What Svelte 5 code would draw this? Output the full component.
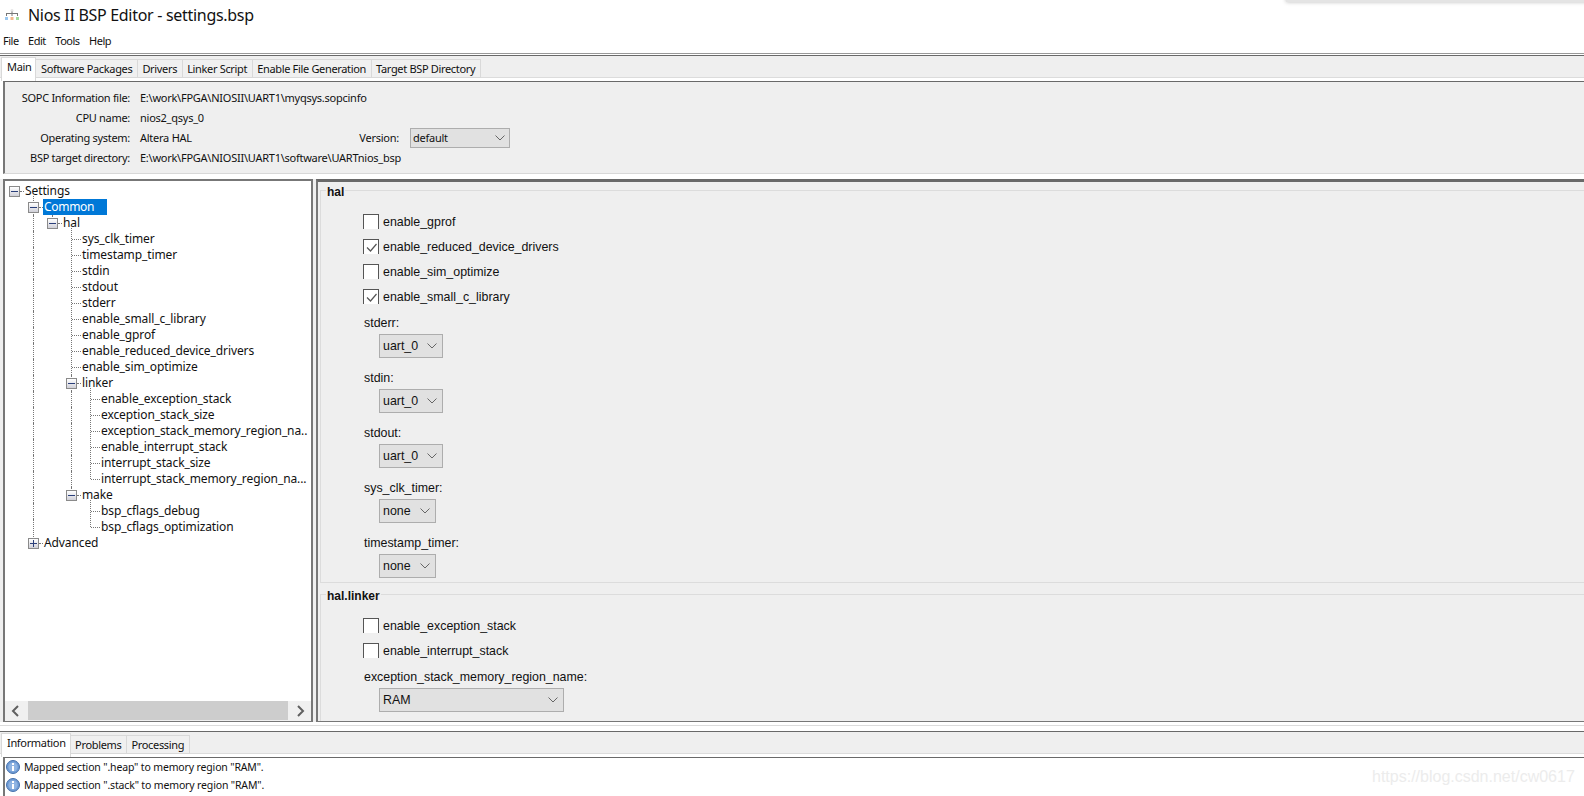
<script>
  const infoRows = [
    ['SOPC Information file:', 'E:\\work\\FPGA\\NIOSII\\UART1\\myqsys.sopcinfo'],
    ['CPU name:', 'nios2_qsys_0'],
    ['Operating system:', 'Altera HAL'],
    ['BSP target directory:', 'E:\\work\\FPGA\\NIOSII\\UART1\\software\\UARTnios_bsp']
  ];
  const tabs = ['Software Packages', 'Drivers', 'Linker Script', 'Enable File Generation', 'Target BSP Directory'];
  // g: one entry per indent column, 1 = dotted vertical guide in that column
  const tree = [
    { t: 'Settings', g: [], exp: '-', top: true },
    { t: 'Common', g: [0], exp: '-', sel: true, down: true, tick: true },
    { t: 'hal', g: [0, 1], exp: '-' },
    ...['sys_clk_timer', 'timestamp_timer', 'stdin', 'stdout', 'stderr', 'enable_small_c_library', 'enable_gprof', 'enable_reduced_device_drivers', 'enable_sim_optimize']
      .map((t) => ({ t, g: [0, 1, 0], conn: 'mid' })),
    { t: 'linker', g: [0, 1, 0], exp: '-', down: true },
    ...['enable_exception_stack', 'exception_stack_size', 'exception_stack_memory_region_na..', 'enable_interrupt_stack', 'interrupt_stack_size']
      .map((t) => ({ t, g: [0, 1, 0, 1], conn: 'mid' })),
    { t: 'interrupt_stack_memory_region_na...', g: [0, 1, 0, 1], conn: 'end' },
    { t: 'make', g: [0, 1, 0], exp: '-' },
    { t: 'bsp_cflags_debug', g: [0, 1, 0, 0], conn: 'mid' },
    { t: 'bsp_cflags_optimization', g: [0, 1, 0, 0], conn: 'end' },
    { t: 'Advanced', g: [0], exp: '+', tick: true }
  ];
  const halChecks = [['enable_gprof', false], ['enable_reduced_device_drivers', true], ['enable_sim_optimize', false], ['enable_small_c_library', true]];
  const halSelects = [['stderr:', 'uart_0', 64], ['stdin:', 'uart_0', 64], ['stdout:', 'uart_0', 64], ['sys_clk_timer:', 'none', 57], ['timestamp_timer:', 'none', 57]];
</script>

{#snippet chevron()}
  <svg class="chev" width="10" height="6" viewBox="0 0 10 6"><path d="M.5.5L5 5 9.5.5" fill="none" stroke="#666" stroke-width="1" /></svg>
{/snippet}

{#snippet info()}
  <svg class="infoicon" width="14" height="14" viewBox="0 0 14 14">
    <circle cx="7" cy="7" r="6.5" fill="#6f9bd4" stroke="#4672ad" />
    <circle cx="7" cy="7" r="4.6" fill="#8fb4e2" />
    <rect x="6" y="6" width="2" height="5" fill="#fff" />
    <rect x="6" y="3" width="2" height="2" fill="#fff" />
  </svg>
{/snippet}

<div class="app">
  <div class="shadow"></div>
  <header class="title">
    <svg class="logo" width="16" height="12" viewBox="0 0 16 12">
      <circle cx="8" cy="1.5" r="1.5" fill="#e4e4e4" />
      <path d="M2 4.5H14M2.5 4.5V7M8 2.5V7M13.5 4.5V7" fill="none" stroke="#777" stroke-width="1" />
      <rect x="1" y="8" width="3" height="3" fill="#9cc8f0" />
      <rect x="6.5" y="8" width="3" height="3" fill="#f3b88c" />
      <rect x="12" y="8" width="3" height="3" fill="#a4dca0" />
    </svg>
    <span>Nios II BSP Editor - settings.bsp</span>
  </header>
  <nav class="menu"><span>File</span><span>Edit</span><span>Tools</span><span>Help</span></nav>

  <div class="rule-top">
    <div class="strip">
      <div class="tab active">Main</div>
      {#each tabs as t}<div class="tab">{t}</div>{/each}
    </div>
    <section class="infopanel">
      <div class="inforows">
        {#each infoRows as [k, v], i}
          <div class="irow">
            <span class="ik">{k}</span><span class="iv">{v}</span>
            {#if i === 2}
              <span class="vlabel">Version:</span>
              <div class="select version"><span>default</span>{@render chevron()}</div>
            {/if}
          </div>
        {/each}
      </div>
    </section>
  </div>

  <div class="split">
    <aside class="treepane">
      <div class="tree">
        {#each tree as n}
          <div class="trow">
            {#each n.g as line}<span class="cell" class:vline={line}></span>{/each}
            {#if n.exp}
              <span class="cell exp" class:hasup={!n.top} class:tick={n.tick} class:down={n.down}>
                <span class="box">
                  <i class="h"></i>{#if n.exp === '+'}<i class="v"></i>{/if}
                </span>
              </span>
            {:else}
              <span class="cell conn" class:end={n.conn === 'end'}></span>
            {/if}
            <span class="tlabel" class:sel={n.sel}>{n.t}</span>
          </div>
        {/each}
      </div>
      <div class="hscroll">
        <svg width="9" height="12" viewBox="0 0 9 12"><path d="M7 1L2 6l5 5" fill="none" stroke="#606060" stroke-width="2" /></svg>
        <div class="thumb"></div>
        <svg width="9" height="12" viewBox="0 0 9 12"><path d="M2 1l5 5-5 5" fill="none" stroke="#606060" stroke-width="2" /></svg>
      </div>
    </aside>

    <main class="settings">
      <fieldset class="group hal">
        <legend>hal</legend>
        <div class="gbody">
          {#each halChecks as [l, c]}
            <div class="check">
              <span class="cb">{#if c}<svg width="13" height="13" viewBox="0 0 13 13"><path d="M2 6.5l3.5 3.5L11.5 3" fill="none" stroke="#555" stroke-width="1.2" /></svg>{/if}</span>
              <span class="clabel">{l}</span>
            </div>
          {/each}
          {#each halSelects as [l, v, w]}
            <div class="field">
              <div class="flabel">{l}</div>
              <div class="select" style="width:{w}px"><span>{v}</span>{@render chevron()}</div>
            </div>
          {/each}
        </div>
      </fieldset>
      <fieldset class="group linker">
        <legend>hal.linker</legend>
        <div class="gbody">
          <div class="check"><span class="cb"></span><span class="clabel">enable_exception_stack</span></div>
          <div class="check"><span class="cb"></span><span class="clabel">enable_interrupt_stack</span></div>
          <div class="field">
            <div class="flabel">exception_stack_memory_region_name:</div>
            <div class="select" style="width:185px"><span>RAM</span>{@render chevron()}</div>
          </div>
        </div>
      </fieldset>
    </main>
  </div>

  <footer class="console">
    <div class="strip">
      <div class="tab active">Information</div>
      <div class="tab">Problems</div>
      <div class="tab">Processing</div>
    </div>
    <div class="log">
      <div class="lrow">{@render info()}<span>Mapped section ".heap" to memory region "RAM".</span></div>
      <div class="lrow">{@render info()}<span>Mapped section ".stack" to memory region "RAM".</span></div>
      <span class="watermark">https://blog.csdn.net/cw0617</span>
    </div>
  </footer>
</div>

<style>
  :global(body) { margin: 0; background: #fff; }
  .app {
    position: relative; width: 1584px; height: 796px; overflow: hidden; background: #fff;
    display: flex; flex-direction: column; color: #111;
    font: 11px/16px "Noto Sans", "Open Sans", sans-serif; letter-spacing: -0.25px;
  }
  .shadow {
    position: absolute; top: -6px; left: 1286px; right: -10px; height: 8px;
    background: #e4e4e4; box-shadow: 0 0 4px #bbb;
  }
  .title { height: 30px; display: flex; align-items: center; font-size: 16px; letter-spacing: -0.3px; padding-left: 4px; box-sizing: border-box; }
  .logo { margin-right: 8px; }
  .menu { height: 23px; display: flex; gap: 9.5px; padding: 0 0 2px 3px; align-items: center; box-sizing: border-box; letter-spacing: -0.5px; }

  .rule-top { border-top: 1px solid #999; padding-top: 1px; }
  .strip {
    border-top: 1px solid #696969; height: 26px; box-sizing: border-box; display: flex; align-items: flex-start; padding-left: 1px;
    background: linear-gradient(#efefef 0 21px, #dcdcdc 21px 22px, #fff 22px);
  }
  .tab {
    margin-top: 3px; height: 19px; box-sizing: border-box; padding: 0 4.5px; line-height: 18px; letter-spacing: -0.33px;
    background: #f0f0f0; border: 1px solid #d9d9d9; border-left: 0; white-space: nowrap;
  }
  .tab.active { margin: 1px 0 0 0; height: 24px; background: #fff; border: 1px solid #d9d9d9; border-bottom: 0; padding: 0 4px 3px 5px; }

  .infopanel {
    margin-left: 3px; height: 93px; box-sizing: border-box; background: #efefef;
    border-top: 1px solid #696969; border-left: 2px solid #777; border-bottom: 1px solid #d8d8d8;
  }
  .inforows { padding-top: 6px; }
  .irow { height: 20px; display: flex; align-items: center; }
  .ik { width: 125px; text-align: right; padding-right: 10px; letter-spacing: -0.3px; }
  .iv { width: 208px; white-space: nowrap; }
  .vlabel { width: 51px; text-align: right; margin-right: 11px; }

  .select {
    height: 20px; box-sizing: border-box; background: #e1e1e1; border: 1px solid #adadad;
    display: flex; align-items: center; justify-content: space-between; padding: 0 4px 0 2px;
  }
  .version { width: 100px; }
  .chev { flex: none; }

  .split { margin-top: 5px; display: flex; height: 543px; background: #efefef; }
  .treepane {
    margin-left: 3px; width: 310px; box-sizing: border-box; background: #fff;
    border: solid #777; border-width: 2px 2px 1px 2px; display: flex; flex-direction: column;
    font-size: 12px; letter-spacing: -0.1px;
  }
  .tree { flex: 1; padding-top: 2px; white-space: nowrap; overflow: hidden; }
  .trow { height: 16px; display: flex; line-height: 16px; }
  .cell { width: 19px; height: 16px; flex: none; position: relative; }
  .vline::before, .exp.hasup::before, .conn::before {
    content: ""; position: absolute; left: 9px; top: 0; bottom: 0; border-left: 1px dotted #777;
  }
  .conn::before { top: -3px; }
  .conn.end::before { bottom: 8px; }
  .exp.hasup::before { bottom: 8px; }
  .exp.tick::before { top: -3px; }
  .exp.down::before { bottom: 0; }
  .conn::after, .exp::after {
    content: ""; position: absolute; left: 10px; right: 0; top: 8px; border-top: 1px dotted #777;
  }
  .exp::after { left: 15px; }
  .box {
    position: absolute; left: 4px; top: 3px; width: 9px; height: 9px; background: linear-gradient(#fff, #d0d0d8);
    border: 1px solid #8a8a8a; z-index: 1;
  }
  .box .h { position: absolute; left: 1px; right: 1px; top: 4px; height: 1px; background: #2a3f7a; }
  .box .v { position: absolute; top: 1px; bottom: 1px; left: 4px; width: 1px; background: #2a3f7a; }
  .tlabel { padding: 0 1px; position: relative; }
  .tlabel.sel { background: #0078d7; color: #fff; width: 62px; letter-spacing: -0.3px; }
  .hscroll { height: 20px; display: flex; align-items: center; justify-content: space-between; background: #f0f0f0; padding: 0 6px 1px; flex: none; box-sizing: border-box; }
  .thumb { width: 260px; height: 19px; background: #cdcdcd; margin-right: 1px; }

  .settings {
    margin-left: 3px; flex: 1; box-sizing: border-box; border-top: 3px solid #696969; border-left: 2px solid #777; border-bottom: 1px solid #777;
    background: #efefef; padding: 0 0 0 2px; overflow: hidden;
    font: 12.4px/16px "Liberation Sans", Arial, sans-serif; letter-spacing: 0;
  }
  .group { margin: 0; padding: 0; border: 1px solid #dcdcdc; border-right: 0; box-sizing: border-box; min-width: 0; }
  .group legend { font-weight: 700; font-size: 12px; margin-left: 5px; padding: 2px 1px 0; line-height: 14px; position: relative; top: 1px; }
  .gbody { margin-left: 42px; padding-top: 12px; }
  .hal { height: 401px; }
  .linker { margin-top: 3px; height: 140px; border-bottom: 0; }
  .check { display: flex; align-items: center; height: 25px; gap: 4px; }
  .cb {
    width: 16px; height: 15px; box-sizing: border-box; background: #fff; display: flex; align-items: center; justify-content: center;
    border: 1px solid #555; border-bottom: 0; margin-bottom: 2px;
  }
  .clabel { margin-bottom: 2px; }
  .field { padding-top: 5px; height: 50px; margin-bottom: 5px; box-sizing: border-box; }
  .flabel { height: 17px; line-height: 17px; margin-left: 1px; }
  .field .select { height: 24px; margin: 2px 0 0 16px; padding: 0 5px 0 3px; }

  .console { margin-top: 3px; border-top: 1px solid #dcdcdc; padding-top: 5px; flex: 1; display: flex; flex-direction: column; }
  .log {
    flex: 1; margin-left: 3px; border-top: 1px solid #696969; border-left: 2px solid #777; position: relative;
    font-size: 10.5px; letter-spacing: -0.15px;
  }
  .lrow { height: 18px; display: flex; align-items: center; gap: 4px; padding-left: 1px; }
  .watermark {
    position: absolute; left: 1367px; top: 8px; font: 16px/22px "Liberation Sans", Arial, sans-serif; letter-spacing: 0; color: #ececec;
  }
</style>
